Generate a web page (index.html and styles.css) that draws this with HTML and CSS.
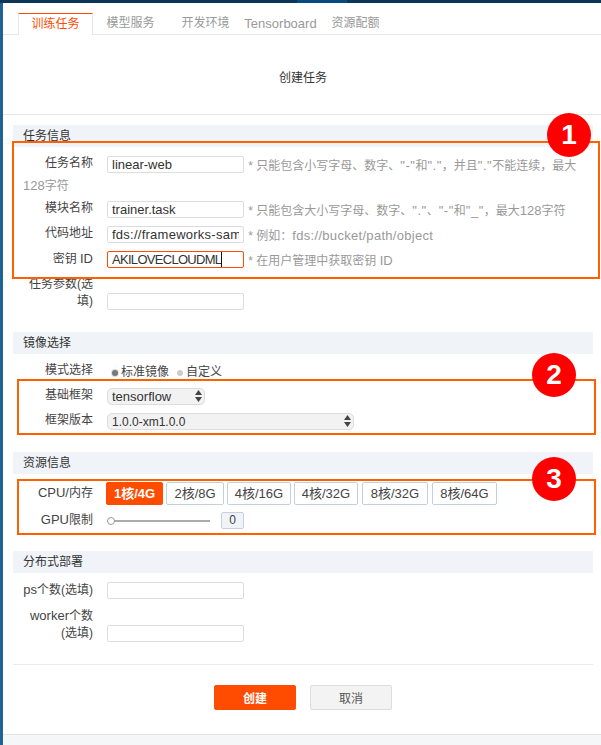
FILE: index.html
```html
<!DOCTYPE html>
<html lang="zh-CN">
<head>
  <meta charset="utf-8">
  <title>创建任务</title>
  <link rel="stylesheet" href="styles.css">
</head>
<body>
  <div id="page">
    <div class="topbar"><span class="topbar-active"></span></div>
    <div class="layout">
      <div class="sidebar"></div>
      <div class="main">
        <ul class="tabs">
          <li class="tab tab-active">训练任务</li>
          <li class="tab">模型服务</li>
          <li class="tab">开发环境</li>
          <li class="tab"><span class="en">Tensorboard</span></li>
          <li class="tab">资源配额</li>
        </ul>
        <h1 class="title">创建任务</h1>

        <div class="content">
          <h2 class="section">任务信息</h2>
          <div class="row">
            <label class="name">任务名称</label>
            <input class="field" type="text" value="linear-web">
            <span class="hint">* 只能包含小写字母、数字、<span class="quote">"-"</span>和<span class="quote">"."</span>，并且<span class="quote">"."</span>不能连续，最大<span class="en">128</span>字符</span>
          </div>
          <div class="row">
            <label class="name">模块名称</label>
            <input class="field" type="text" value="trainer.task">
            <span class="hint">* 只能包含大小写字母、数字、<span class="quote">"."</span>、<span class="quote">"-"</span>和<span class="quote">"_"</span>，最大<span class="en">128</span>字符</span>
          </div>
          <div class="row">
            <label class="name">代码地址</label>
            <input class="field field-clip" type="text" value="fds://frameworks-samples/linear">
            <span class="hint">* 例如：<span class="en en-wide">fds://bucket/path/object</span></span>
          </div>
          <div class="row">
            <label class="name">密钥 <span class="en">ID</span></label>
            <div class="field field-focus">AKILOVECLOUDML<span class="caret"></span></div>
            <span class="hint">* 在用户管理中获取密钥 <span class="en">ID</span></span>
          </div>
          <div class="row row-tall">
            <label class="name">任务参数(选填)</label>
            <input class="field" type="text">
          </div>

          <h2 class="section section-gap">镜像选择</h2>
          <div class="row">
            <label class="name">模式选择</label>
            <div class="radios">
              <span class="radio radio-on"></span><span class="radio-text">标准镜像</span>
              <span class="radio"></span><span>自定义</span>
            </div>
          </div>
          <div class="row">
            <label class="name">基础框架</label>
            <div class="select-wrap select-short">
              <select class="select"><option>tensorflow</option></select>
              <svg class="arrows" width="7" height="12" viewBox="0 0 7 12"><path d="M3.5 0L7 5H0zM3.5 12L0 7h7z" fill="#444"/></svg>
            </div>
          </div>
          <div class="row">
            <label class="name">框架版本</label>
            <div class="select-wrap select-long">
              <select class="select"><option>1.0.0-xm1.0.0</option></select>
              <svg class="arrows" width="7" height="12" viewBox="0 0 7 12"><path d="M3.5 0L7 5H0zM3.5 12L0 7h7z" fill="#444"/></svg>
            </div>
          </div>

          <h2 class="section section-gap">资源信息</h2>
          <div class="row row-flex row-tags">
            <label class="name"><span class="en">CPU/</span>内存</label>
            <div class="tags">
              <span class="tag tag-on">1核/4G</span>
              <span class="tag">2核/8G</span>
              <span class="tag">4核/16G</span>
              <span class="tag">4核/32G</span>
              <span class="tag">8核/32G</span>
              <span class="tag">8核/64G</span>
            </div>
          </div>
          <div class="row row-flex row-slider">
            <label class="name"><span class="en">GPU</span>限制</label>
            <div class="slider"><span class="knob"></span></div>
            <span class="count">0</span>
          </div>

          <h2 class="section section-gap">分布式部署</h2>
          <div class="row">
            <label class="name"><span class="en">ps</span>个数(选填)</label>
            <input class="field" type="text">
          </div>
          <div class="row row-tall">
            <label class="name"><span class="en">worker</span>个数(选填)</label>
            <input class="field" type="text">
          </div>

          <div class="actions">
            <button class="btn btn-primary">创建</button>
            <button class="btn">取消</button>
          </div>
        </div>
        <div class="footer"></div>
      </div>
    </div>

    <!-- annotations drawn over the screenshot -->
    <div class="box box-1"></div>
    <div class="box box-2"></div>
    <div class="box box-3"></div>
    <div class="mark mark-1">1</div>
    <div class="mark mark-2">2</div>
    <div class="mark mark-3">3</div>
  </div>
</body>
</html>
```

FILE: styles.css
```css
* {
  box-sizing: border-box;
}
body {
  margin: 0;
  font-family: "Liberation Sans", "Noto Sans CJK SC", sans-serif;
  font-size: 12px;
  color: #444;
  background-color: #fff;
}
#page {
  position: relative;
  width: 601px;
  height: 745px;
  overflow: hidden;
}
.en {
  font-size: 13px;
}
.en-wide {
  letter-spacing: 0.3px;
}
.quote {
  font-size: 13px;
  letter-spacing: 0.5px;
}
.topbar {
  height: 3px;
  background-color: #0c3557;
  padding-left: 297px;
}
.topbar-active {
  display: block;
  width: 50px;
  height: 3px;
  background-color: #064a7e;
}
.layout {
  display: flex;
  height: 742px;
}
.sidebar {
  width: 3px;
  background-color: #1e6296;
}
.main {
  flex: 1;
  display: flex;
  flex-direction: column;
}

/* tabs */
.tabs {
  display: flex;
  list-style: none;
  margin: 0;
  padding: 10px 0 0 15px;
  height: 32px;
  border-bottom: 1px solid #e8e8e8;
}
.tab {
  width: 75px;
  height: 22px;
  line-height: 21px;
  text-align: center;
  color: #999;
  white-space: nowrap;
}
.tab .en {
  vertical-align: 1px;
}
.tab-active {
  color: #ff4c00;
  background-color: #fff;
  border: 1px solid #e8e8e8;
  border-top-color: #ff4c00;
  border-bottom: 0;
}
.title {
  margin: 0;
  height: 80px;
  line-height: 86px;
  padding-left: 2px;
  text-align: center;
  font-size: 12px;
  font-weight: normal;
  color: #333;
  border-bottom: 1px solid #e6e6e6;
}

/* form */
.content {
  flex: 1;
  padding: 10px 8px 0 10px;
}
.section {
  margin: 0 0 9px;
  height: 22px;
  line-height: 22px;
  padding-left: 10px;
  font-size: 12px;
  font-weight: normal;
  color: #333;
  background-color: #f0f4f8;
}
.section-gap {
  margin-top: 19px;
}
.row {
  padding-left: 10px;
  margin-bottom: 5px;
  line-height: 20px;
  min-height: 20px;
}
.name {
  float: left;
  width: 70px;
  margin-right: 14px;
  margin-top: -1px;
  line-height: 17px;
  text-align: right;
}
.field {
  display: inline-block;
  width: 137px;
  height: 17px;
  line-height: 15px;
  padding: 0 4px;
  margin: 0;
  vertical-align: top;
  font-family: inherit;
  font-size: 13px;
  color: #333;
  background-color: #fff;
  border: 1px solid #ddd;
  border-radius: 2px;
  outline: none;
  white-space: nowrap;
}
.field-clip {
  letter-spacing: 0.25px;
}
.field-focus {
  border-color: #ff4c00;
  letter-spacing: -0.7px;
}
.caret {
  display: inline-block;
  width: 1px;
  height: 15px;
  vertical-align: top;
  background-color: #111;
}
.hint {
  margin-left: 1px;
  color: #999;
}
.row-tall {
  display: flex;
  align-items: flex-end;
  margin-bottom: 0;
  padding-bottom: 3px;
}
.row-tall .name {
  float: none;
  margin-top: 0;
}

/* radios */
.radios {
  display: flex;
  align-items: center;
  height: 17px;
  padding-left: 5px;
}
.radio {
  width: 6px;
  height: 6px;
  margin-right: 3px;
  margin-top: 2px;
  border-radius: 50%;
  background-color: #ccc;
}
.radio-on {
  background-color: #777;
  box-shadow: 0 0 0 1px #ddd;
}
.radio-text {
  margin-right: 8px;
}

/* selects */
.select-wrap {
  position: relative;
  height: 17px;
}
.select-short {
  width: 98px;
  margin-left: 84px;
}
.select-long {
  width: 247px;
  margin-left: 84px;
}
.select {
  appearance: none;
  display: block;
  width: 100%;
  height: 17px;
  padding: 0 4px;
  font-family: inherit;
  font-size: 13px;
  color: #333;
  background-color: #f2f2f2;
  border: 1px solid #ddd;
  border-radius: 5px;
  outline: none;
}
.select-long .select {
  font-size: 12px;
}
.arrows {
  position: absolute;
  right: 3px;
  top: 2px;
}

/* resource tags */
.row-flex {
  display: flex;
  align-items: center;
}
.row-flex .name {
  float: none;
}
.row-tags {
  margin-top: -1px;
  margin-bottom: 7px;
}
.row-tags .name {
  margin-right: 13px;
  margin-top: -2px;
}
.tags {
  display: flex;
  gap: 3px;
}
.tag {
  height: 23px;
  line-height: 21px;
  text-align: center;
  font-size: 13px;
  white-space: nowrap;
  color: #444;
  border: 1px solid #c5d0de;
  border-radius: 2px;
}
.tag-on {
  color: #fff;
  font-weight: bold;
  background-color: #ff4c00;
  border-color: #ff4c00;
}
.tag:nth-child(1) { width: 57px; }
.tag:nth-child(2) { width: 58px; }
.tag:nth-child(3) { width: 64px; }
.tag:nth-child(4) { width: 64px; }
.tag:nth-child(5) { width: 66px; margin-left: 1px; }
.tag:nth-child(6) { width: 65px; margin-left: 1px; }

/* slider */
.row-slider {
  align-items: flex-start;
  margin-bottom: 0;
}
.slider {
  position: relative;
  width: 103px;
  height: 2px;
  margin-top: 8px;
  background-color: #aaa;
}
.knob {
  position: absolute;
  left: 0;
  top: -3px;
  width: 8px;
  height: 8px;
  background-color: #fff;
  border: 1px solid #999;
  border-radius: 50%;
}
.count {
  width: 23px;
  height: 17px;
  line-height: 15px;
  margin-left: 11px;
  text-align: center;
  background-color: #f0f4f8;
  border: 1px solid #c5d0de;
  border-radius: 2px;
}

/* buttons */
.actions {
  display: flex;
  justify-content: center;
  gap: 14px;
  margin-top: 19px;
  padding-top: 20px;
  border-top: 1px solid #ebebeb;
}
.btn {
  width: 82px;
  height: 25px;
  padding: 0;
  font-family: inherit;
  font-size: 12px;
  color: #555;
  background-color: #f3f3f3;
  border: 1px solid #ddd;
  border-radius: 2px;
}
.btn-primary {
  color: #fff;
  font-weight: bold;
  background-color: #ff4c00;
  border-color: #ff4c00;
}
.footer {
  height: 11px;
  background-color: #f5f6f8;
  border-top: 1px solid #e4e4e4;
}

/* annotations */
.box {
  position: absolute;
  border: 2px solid #ff6000;
}
.box-1 {
  left: 12px;
  top: 141px;
  width: 588px;
  height: 138px;
}
.box-2 {
  left: 17px;
  top: 379px;
  width: 579px;
  height: 56px;
}
.box-3 {
  left: 17px;
  top: 479px;
  width: 579px;
  height: 56px;
}
.mark {
  position: absolute;
  width: 44px;
  height: 44px;
  line-height: 44px;
  text-align: center;
  font-size: 28px;
  font-weight: bold;
  color: #fff;
  background-color: #f00;
  border-radius: 50%;
}
.mark-1 {
  left: 547px;
  top: 113px;
}
.mark-2 {
  left: 532px;
  top: 353px;
}
.mark-3 {
  left: 532px;
  top: 457px;
}
```
